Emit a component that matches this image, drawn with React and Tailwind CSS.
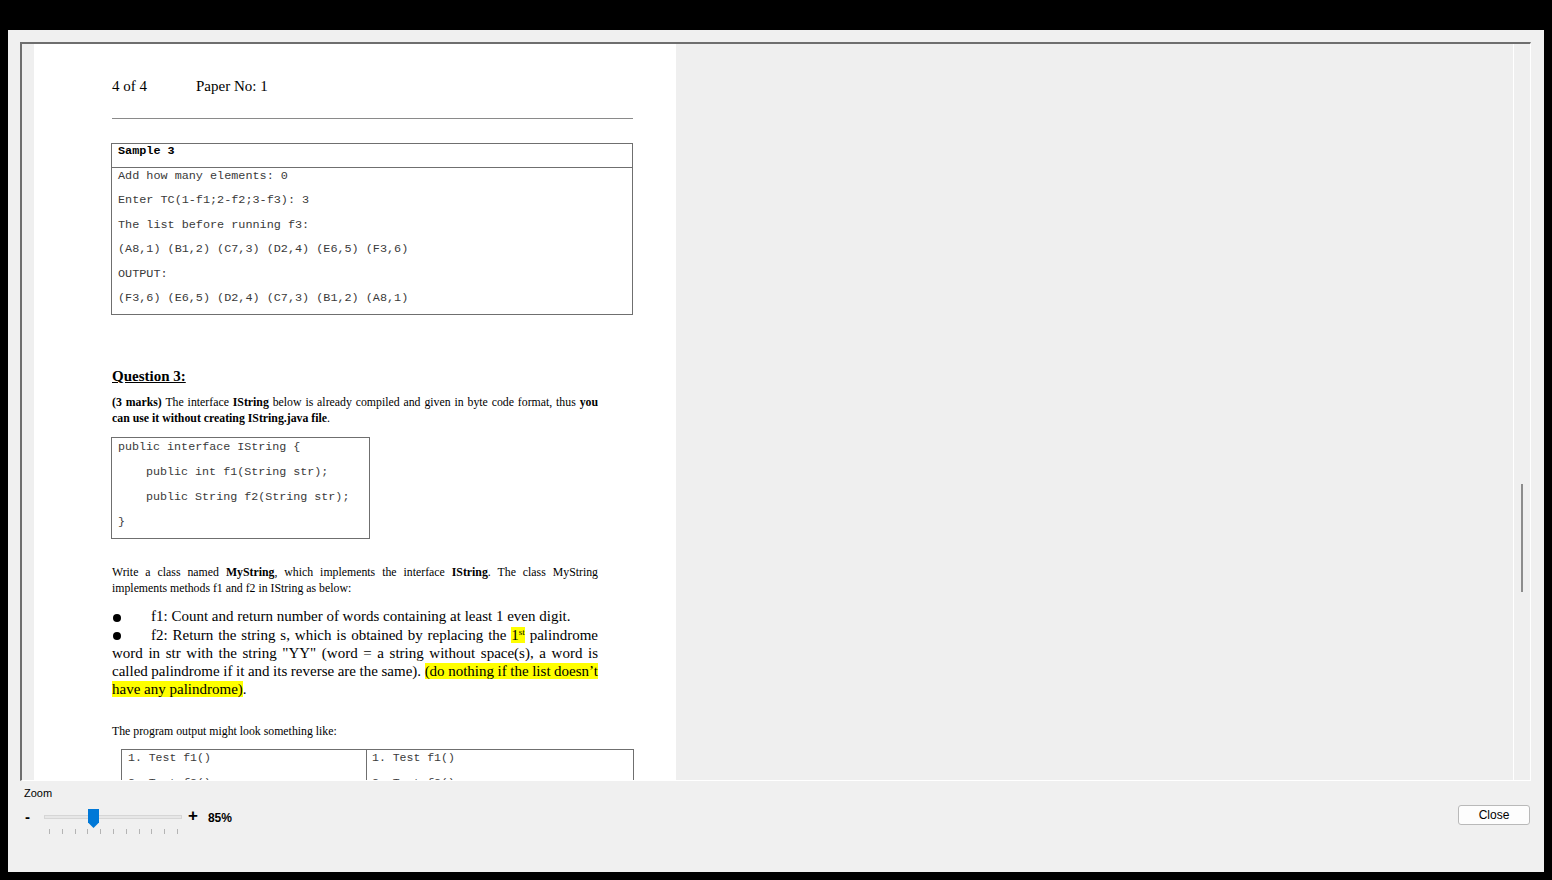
import React from 'react';

const serif = "[font-family:'Liberation_Serif',serif]";
const mono = "[font-family:'Liberation_Mono',monospace]";
const sans = "[font-family:'Liberation_Sans',Arial,sans-serif]";

const sampleRows = [
  'Add how many elements: 0',
  'Enter TC(1-f1;2-f2;3-f3): 3',
  'The list before running f3:',
  '(A8,1) (B1,2) (C7,3) (D2,4) (E6,5) (F3,6)',
  'OUTPUT:',
  '(F3,6) (E6,5) (D2,4) (C7,3) (B1,2) (A8,1)',
];

const Bullet = () => (
  <span className="inline-block w-[39px]">
    <span className="inline-block w-[8px] h-[8px] rounded-full bg-black ml-px align-middle" />
  </span>
);

const Page = () => (
  <div className={`w-[642px] h-full shrink-0 bg-white pl-[78px] pt-[34px] overflow-hidden text-black ${serif}`}>
    {/* en-tete */}
    <div className="flex text-[15px] leading-[17px]">
      <span className="w-[84px]">4 of 4</span>
      <span>Paper No: 1</span>
    </div>
    <div className="mt-[23px] h-px w-[521px] bg-[#8a8a8a]" />

    {/* Sample 3 */}
    <div className={`mt-[24px] -ml-px w-[522px] border border-[#6f6f6f] text-[11.8px] ${mono}`}>
      <div className="h-[24px] leading-[12px] pt-[1px] pl-[6px] font-bold border-b border-[#6f6f6f]">Sample 3</div>
      {sampleRows.map((r, i) => (
        <div key={i} className="h-[24.4px] leading-[12px] pt-[2px] pl-[6px] text-[#3a3a3a] whitespace-pre">
          {r}
        </div>
      ))}
    </div>

    {/* Question 3 */}
    <div className="mt-[52px] text-[15px] leading-[18px] font-bold underline">Question 3:</div>
    <div className="mt-[9px] w-[486px] text-[11.8px] leading-[16px]">
      <div className="text-justify [text-align-last:justify] [word-spacing:-1px]">
        <b>(3 marks)</b> The interface <b>IString</b> below is already compiled and given in byte code format, thus <b>you</b>
      </div>
      <div>
        <b>can use it without creating IString.java file</b>.
      </div>
    </div>

    <div className={`mt-[11px] -ml-px w-[259px] border border-[#6f6f6f] text-[11.7px] text-[#3a3a3a] ${mono}`}>
      <div className="h-[25px] leading-[14px] pt-[2px] pl-[6px] whitespace-pre">public interface IString {'{'}</div>
      <div className="h-[25px] leading-[14px] pt-[2px] pl-[34px] whitespace-pre">public int f1(String str);</div>
      <div className="h-[25px] leading-[14px] pt-[2px] pl-[34px] whitespace-pre">public String f2(String str);</div>
      <div className="h-[25px] leading-[14px] pt-[2px] pl-[6px]">{'}'}</div>
    </div>

    <div className="mt-[25px] w-[486px] text-[11.8px] leading-[16px]">
      <div className="text-justify [text-align-last:justify] [word-spacing:-1px]">
        Write a class named <b>MyString</b>, which implements the interface <b>IString</b>. The class MyString
      </div>
      <div>implements methods f1 and f2 in IString as below:</div>
    </div>

    <div className="mt-[11px] w-[486px] text-[15px] leading-[18.25px]">
      <div className="whitespace-nowrap">
        <Bullet />f1: Count and return number of words containing at least 1 even digit.
      </div>
      <div className="text-justify [text-align-last:justify] [word-spacing:-1px]">
        <Bullet />f2: Return the string s, which is obtained by replacing the{' '}
        <span className="bg-[#ffff00]">
          1<sup className="text-[9px]">st</sup>
        </span>{' '}
        palindrome
      </div>
      <div className="text-justify [text-align-last:justify] [word-spacing:-1px]">
        word in str with the string "YY" (word = a string without space(s), a word is
      </div>
      <div className="text-justify [text-align-last:justify] [word-spacing:-1.2px]">
        called palindrome if it and its reverse are the same).{' '}
        <span className="bg-[#ffff00]">(do nothing if the list doesn’t</span>
      </div>
      <div>
        <span className="bg-[#ffff00]">have any palindrome)</span>.
      </div>
    </div>

    <div className="mt-[24px] text-[11.8px] leading-[16px]">The program output might look something like:</div>

    <div className={`mt-[10px] ml-[9px] w-[513px] border border-[#6f6f6f] flex text-[11.5px] text-[#3a3a3a] ${mono}`}>
      <div className="w-[245px] border-r border-[#6f6f6f]">
        {['1. Test f1()', '2. Test f2()', 'Enter TC: 1', 'Enter a string:'].map((t, i) => (
          <div key={i} className="h-[25px] leading-[14px] pt-[1px] pl-[6px] whitespace-pre">{t}</div>
        ))}
      </div>
      <div className="flex-1">
        {['1. Test f1()', '2. Test f2()', 'Enter TC: 2', 'Enter a string:'].map((t, i) => (
          <div key={i} className="h-[25px] leading-[14px] pt-[1px] pl-[5px] whitespace-pre">{t}</div>
        ))}
      </div>
    </div>
  </div>
);

const Viewer = () => (
  <div className="w-[1511px] h-[739px] shrink-0 flex border-t-2 border-l-2 border-[#6e6e6e] border-r border-b border-r-white border-b-white overflow-hidden">
    <div className="w-[12px] shrink-0 bg-[#efefef]" />
    <Page />
    <div className="flex-1 bg-[#efefef]" />
    <div className="w-[17px] shrink-0 bg-[#efefef] border-l border-white">
      <div className="mt-[440px] ml-[7px] w-[2px] h-[108px] bg-[#8c8c8c]" />
    </div>
  </div>
);

const Slider = () => (
  <div className="relative w-[140px] h-[30px] ml-[13px]">
    <div className="absolute left-[1px] top-[10px] w-[138px] h-[4px] bg-[#e7e7e7] border border-[#d6d6d6]" />
    <div className="absolute left-[6px] top-[24px] w-[129px] h-[5px] flex justify-between">
      {Array.from({ length: 11 }).map((_, i) => (
        <span key={i} className="w-px h-full bg-[#b4b4b4]" />
      ))}
    </div>
    <svg className="absolute left-[45px] top-[4px]" width="11" height="19" viewBox="0 0 11 19">
      <path d="M0 0 H11 V13.5 L5.5 19 L0 13.5 Z" fill="#0078d7" />
    </svg>
  </div>
);

const Footer = () => (
  <div className={`flex flex-col text-black ${sans}`}>
    <div className="mt-[5px] pl-[4px] text-[11px] leading-[14px]">Zoom</div>
    <div className="mt-[5px] flex items-start pl-[5px] pr-[14px]">
      <span className="w-[5px] mt-[2px] text-[15px] leading-[20px] font-bold">-</span>
      <Slider />
      <span className="ml-[5px] mt-[1px] text-[17px] leading-[20px] font-bold">+</span>
      <span className="ml-[10px] mt-[6px] text-[12px] leading-[14px] font-bold">85%</span>
      <button className="ml-auto w-[72px] h-[20px] rounded-[3px] border border-[#b9b9b9] bg-[#fdfdfd] text-[12px] leading-[18px] text-black">
        Close
      </button>
    </div>
  </div>
);

export default function App() {
  return (
    <div className="w-[1552px] h-[880px] bg-black pt-[30px] pl-[8px] overflow-hidden">
      <div className="w-[1536px] h-[842px] bg-[#f0f0f0] pt-[12px] pl-[12px] flex flex-col">
        <Viewer />
        <Footer />
      </div>
    </div>
  );
}
